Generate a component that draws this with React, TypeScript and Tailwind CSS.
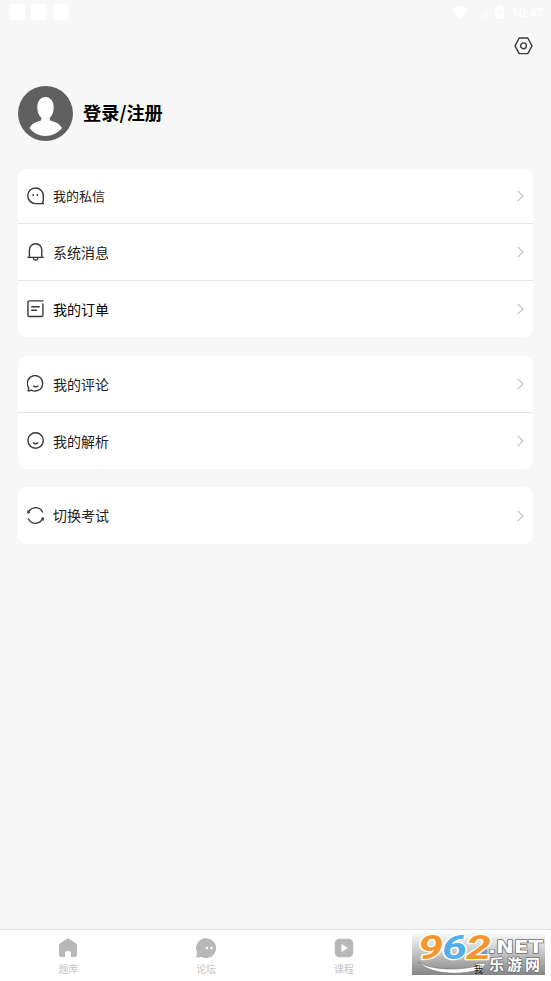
import type { ReactNode } from "react";

type Item = {
  label: string;
  icon: ReactNode;
  row: string;
  text: string;
};

const line = {
  width: 18,
  height: 18,
  viewBox: "0 0 18 18",
  fill: "none",
  stroke: "#383838",
  strokeWidth: 1.4,
  strokeLinecap: "round",
  strokeLinejoin: "round",
} as const;

const MessageIcon = () => (
  <svg {...line}>
    <path d="M16.4 16.6H8.6A7.8 7.8 0 1 1 16.3 8.8v4.8c0 .9-.3 1.300-.9 2Z" />
    <path d="M6.2 7.500v.9M10.400 7.500v.9" />
  </svg>
);

const BellIcon = () => (
  <svg {...line}>
    <path d="M1 14.400h15.200M2.400 14.400V7a6.200 6.200 0 0 1 12.400 0v7.400M6.400 15.600c.4 1.900 4 1.900 4.400 0" />
  </svg>
);

const OrderIcon = () => (
  <svg {...line}>
    <path d="M15.900.9H2.200C1.400.9.900 1.300.900 2.100v13.200c0 .8.500 1.200 1.300 1.200h12.400c.8 0 1.300-.4 1.300-1.200V4M4.700 6.800h7.500M4.700 10.300h4.700" />
  </svg>
);

const CommentIcon = () => (
  <svg {...line}>
    <path d="M1.200 15.900l.5-3.100A7.700 7.700 0 1 1 4.300 15.100c-1 .5-2 .8-3.100.8Z" />
    <path d="M6.500 11c1.200 1 3.200 1 4.400 0" />
  </svg>
);

const SmileIcon = () => (
  <svg {...line}>
    <circle cx="8.600" cy="8.500" r="7.700" />
    <path d="M6.400 10.900c1.200 1 3.200 1 4.400 0" />
  </svg>
);

const SwitchIcon = () => (
  <svg {...line}>
    <path d="M1.600 5.200C4.600-.8 12.800-.8 15.600 5M15.600 11.800c-3 6-11.200 6-14 .2" />
    <path d="M.9 3.900v2.500l1.500-.9ZM16.300 13.100v-2.500l-1.500.9Z" fill="#383838" strokeWidth="1" />
  </svg>
);

const groups: { card: string; items: Item[] }[] = [
  {
    card: "mt-7",
    items: [
      { label: "我的私信", icon: <MessageIcon />, row: "h-[55px]", text: "text-[13px] text-[#222]" },
      { label: "系统消息", icon: <BellIcon />, row: "h-[57px]", text: "text-[14px] text-[#222]" },
      { label: "我的订单", icon: <OrderIcon />, row: "h-[56px]", text: "text-[14px] text-black" },
    ],
  },
  {
    card: "mt-[19px]",
    items: [
      { label: "我的评论", icon: <CommentIcon />, row: "h-[57px]", text: "text-[14px] text-[#222]" },
      { label: "我的解析", icon: <SmileIcon />, row: "h-[56px]", text: "text-[14px] text-[#222]" },
    ],
  },
  {
    card: "mt-[18px]",
    items: [{ label: "切换考试", icon: <SwitchIcon />, row: "h-[57px]", text: "text-[14px] text-[#222]" }],
  },
];

const tabs = [
  {
    label: "题库",
    icon: (
      <svg width="20" height="20" viewBox="0 0 20 20" fill="#b8b8b8">
        <path d="M8.6.9 2.200 5.200C1.300 5.800 1 6.300 1 7.300v9.400C1 18 1.800 19 3.200 19H7v-4.200c0-1 .5-1.500 1.500-1.500h3c1 0 1.500.5 1.500 1.500V19h3.800c1.400 0 2.200-1 2.200-2.300V7.300c0-1-.3-1.500-1.200-2.100L11.400.9c-1-.6-1.800-.6-2.800 0Z" />
      </svg>
    ),
  },
  {
    label: "论坛",
    icon: (
      <svg width="22" height="22" viewBox="0 0 22 22">
        <path d="M1.400 20.800 2 15.400a10 10 0 1 1 4.600 4.700Z" fill="#b8b8b8" />
        <circle cx="12" cy="11" r="1.300" fill="white" />
        <circle cx="16.400" cy="11" r="1.300" fill="white" />
      </svg>
    ),
  },
  {
    label: "课程",
    icon: (
      <svg width="20" height="20" viewBox="0 0 20 20">
        <rect x=".8" y=".8" width="18.400" height="18.400" rx="4.500" fill="#b8b8b8" />
        <path d="M7.800 6.600v6.800l5.400-3.400Z" fill="white" stroke="white" strokeWidth=".8" strokeLinejoin="round" />
      </svg>
    ),
  },
];

function StatusBar() {
  return (
    <div className="flex h-6 items-center justify-between pl-[9px] pr-[7px]">
      <div className="flex gap-1.5">
        <span className="size-4 rounded-[3px] bg-white" />
        <span className="size-4 rounded-[3px] bg-white" />
        <span className="size-4 rounded-[3px] bg-white" />
      </div>
      <div className="flex items-center text-white">
        <svg width="16" height="13" viewBox="0 0 16 13" fill="currentColor">
          <path d="M0 3.200C4.600-.9 11.400-.9 16 3.200L8 13Z" />
        </svg>
        <svg className="ml-2" width="12" height="13" viewBox="0 0 12 13" fill="#fafafa">
          <path d="M12 0v13H0Z" />
        </svg>
        <svg className="ml-[7px]" width="9" height="14" viewBox="0 0 9 14" fill="currentColor">
          <path d="M3 0h3v1.500h2c.6 0 1 .4 1 1V13c0 .6-.4 1-1 1H1c-.6 0-1-.4-1-1V2.500c0-.6.400-1 1-1h2Z" />
          <path d="M5 4 2.500 8.500h1.800V12l2.400-4.700H5Z" fill="#f7f7f7" />
        </svg>
        <span className="ml-[7px] font-['Roboto'] text-[13px] leading-none font-medium">10:47</span>
      </div>
    </div>
  );
}

function Watermark() {
  return (
    <svg className="absolute top-[3px] right-[6px] overflow-visible" width="133" height="42" viewBox="0 0 133 42">
      <defs>
        <linearGradient id="plate" x1="0" y1="0" x2="0" y2="1">
          <stop offset="0" stopColor="#fafafa" />
          <stop offset=".5" stopColor="#c2c2c2" />
          <stop offset="1" stopColor="#858585" />
        </linearGradient>
      </defs>
      <rect width="133" height="42" fill="url(#plate)" />
      <rect x="62" y="14" width="13" height="11" rx="3" fill="#7794bf" />
      <path
        d="M6 29C20 37 44 38 65 33l-2-2 11-1-6 9-2-2C46 43 18 41 6 29Z"
        fill="white"
        stroke="#777"
        strokeWidth=".7"
      />
      <g
        fontFamily="Roboto, sans-serif"
        fontSize="33"
        fontWeight="bold"
        fontStyle="italic"
        strokeLinejoin="round"
        paintOrder="stroke"
        stroke="white"
        strokeWidth="2.500"
      >
        <text x="6" y="26" textLength="25" lengthAdjust="spacingAndGlyphs" fill="#f8962e">9</text>
        <text x="30" y="26" textLength="25" lengthAdjust="spacingAndGlyphs" fill="#55aee5">6</text>
        <text x="54" y="26" textLength="25" lengthAdjust="spacingAndGlyphs" fill="#f8962e">2</text>
      </g>
      <text x="62" y="40" fontSize="9" fontFamily="Noto Sans CJK SC, sans-serif" fill="#111">我</text>
      <g fill="white" stroke="#707070" strokeWidth="1.500" strokeLinejoin="round" paintOrder="stroke" fontWeight="bold">
        <text
          x="76"
          y="20"
          fontSize="18"
          textLength="55"
          lengthAdjust="spacingAndGlyphs"
          fontFamily="DejaVu Sans, sans-serif"
        >
          .NET
        </text>
        <text x="77" y="37" fontSize="15" textLength="51" fontFamily="Noto Sans CJK SC, sans-serif">乐游网</text>
      </g>
    </svg>
  );
}

export default function App() {
  return (
    <div className="flex h-[981px] w-[551px] flex-col overflow-hidden bg-[#f7f7f7] font-['Noto_Sans_CJK_SC',sans-serif]">
      <StatusBar />

      <header className="flex h-[62px] justify-end pt-3 pr-[18px]">
        <svg {...line} width="19" height="20" viewBox="0 0 19 20">
          <path d="M5.200 2h8.600L18 9.800l-4.200 7.800H5.200L1 9.800Z" />
          <circle cx="9.500" cy="9.800" r="2.900" />
        </svg>
      </header>

      <main className="flex-1 px-[18px]">
        <div className="flex items-center">
          <svg width="55" height="55" viewBox="0 0 55 55">
            <circle cx="27.500" cy="27.500" r="27.500" fill="#606060" />
            <path
              d="M27.500 11c5 0 8.200 4.300 8.200 10.200 0 4.800-1.500 8.600-4 10.700-.3 1.600.4 2.600 2 3.200 5.200 1.500 8.800 3.600 10.300 7C39.500 47.500 34 50 27.500 50S15.500 47.500 11.500 42.100c1.500-3.400 4.700-5.500 9.900-7 1.600-.6 2.300-1.600 2-3.200-2.500-2.100-4.100-5.900-4.100-10.700 0-5.900 3.200-10.200 8.200-10.200Z"
              fill="white"
            />
          </svg>
          <h1 className="ml-[10px] pb-0.5 text-[18.200px] leading-none font-bold text-black">登录/注册</h1>
        </div>

        {groups.map((g) => (
          <section key={g.items[0].label} className={`divide-y divide-[#e6e6e6] rounded-[9px] bg-white ${g.card}`}>
            {g.items.map((item) => (
              <div key={item.label} className={`flex items-center px-[9px] ${item.row}`}>
                {item.icon}
                <span className={`ml-2 pb-px leading-none ${item.text}`}>{item.label}</span>
                <svg className="ml-auto" width="7" height="12" viewBox="0 0 7 12" fill="none" stroke="#c0c0c0" strokeWidth="1.100">
                  <path d="M.7.800 6 6 .700 11.200" />
                </svg>
              </div>
            ))}
          </section>
        ))}
      </main>

      <nav className="relative grid h-[52px] grid-cols-4 border-t border-[#dedede] bg-white">
        {tabs.map((t) => (
          <div key={t.label} className="flex flex-col items-center pt-[7px] pr-px">
            <span className="flex h-[21px] items-center">{t.icon}</span>
            <span className="mt-[6px] text-[10px] leading-none text-[#c4c4c4]">{t.label}</span>
          </div>
        ))}
        <Watermark />
      </nav>
    </div>
  );
}
